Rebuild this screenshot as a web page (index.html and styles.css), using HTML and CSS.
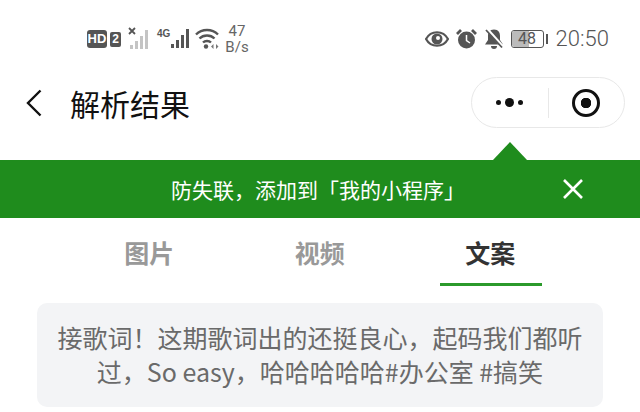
FILE: index.html
```html
<!DOCTYPE html>
<html lang="zh-CN">
<head>
    <meta charset="UTF-8">
    <meta name="viewport" content="width=device-width, initial-scale=1.0">
    <title>解析结果</title>
    <link rel="stylesheet" href="styles.css">
</head>
<body>
    <div class="page">
        <!-- status bar -->
        <div class="status">
            <div class="status-left">
                <span class="hd">HD</span>
                <span class="sim">2</span>
                <svg class="signal-x" width="22" height="24" viewBox="0 0 22 24">
                    <path d="M1 1l6 6M7 1l-6 6" stroke="#555" stroke-width="1.800" fill="none"/>
                    <rect x="2" y="18" width="3" height="4" fill="#c4c4c4"/>
                    <rect x="7" y="14" width="3" height="8" fill="#c4c4c4"/>
                    <rect x="12" y="9" width="3" height="13" fill="#c4c4c4"/>
                    <rect x="17" y="3" width="3" height="19" fill="#c4c4c4"/>
                </svg>
                <div class="signal-4g">
                    <span class="net">4G</span>
                    <svg width="21" height="20" viewBox="0 0 21 20">
                        <rect x="1" y="15" width="3" height="4" fill="#555"/>
                        <rect x="6" y="11" width="3" height="8" fill="#555"/>
                        <rect x="11" y="6" width="3" height="13" fill="#555"/>
                        <rect x="16" y="0" width="3" height="19" fill="#555"/>
                    </svg>
                </div>
                <svg class="wifi" width="24" height="22" viewBox="0 0 24 22">
                    <path d="M1 6.500c6-6 16-6 22 0M4.500 10.500c4-4 11-4 15 0M8 14.500c2-2 6-2 8 0" stroke="#555" stroke-width="2.400" fill="none"/>
                    <circle cx="11" cy="18.500" r="2.200" fill="#555"/>
                    <path d="M16 18.500l2.500-2.500v5zM23.500 18.500l-2.500-2.500v5z" fill="#777"/>
                </svg>
                <div class="speed"><span>47</span><span>B/s</span></div>
            </div>
            <div class="status-right">
                <svg width="24" height="16" viewBox="0 0 24 16">
                    <path d="M1 8c5-9 17-9 22 0c-5 9-17 9-22 0z" fill="none" stroke="#555" stroke-width="2.200"/>
                    <circle cx="12" cy="8" r="5.500" fill="#555"/>
                    <circle cx="13" cy="7" r="2" fill="#fff"/>
                </svg>
                <svg width="21" height="20" viewBox="0 0 21 20">
                    <circle cx="10.500" cy="11" r="8.500" fill="#555"/>
                    <path d="M10.500 6v5.500l3.500 2.500" stroke="#fff" stroke-width="1.500" fill="none"/>
                    <path d="M1 5l4-4M20 5l-4-4" stroke="#555" stroke-width="2.800" fill="none"/>
                </svg>
                <svg width="20" height="20" viewBox="0 0 20 20">
                    <path d="M10 0.500c-4.500 0-6 3-6 6.500v4l-3 4.500h18l-3-4.500v-4c0-3.500-1.500-6.500-6-6.500z" fill="#555"/>
                    <path d="M7 17a3 3 0 0 0 6 0z" fill="#555"/>
                    <path d="M3 0l16 18" stroke="#fff" stroke-width="3"/>
                    <path d="M2 1l16 17.500" stroke="#555" stroke-width="1.800"/>
                </svg>
                <div class="battery-wrap">
                    <div class="battery"><div class="battery-fill"></div><span class="battery-num">48</span></div>
                    <div class="battery-tip"></div>
                </div>
                <span class="clock">20:50</span>
            </div>
        </div>

        <!-- title bar -->
        <div class="nav">
            <svg class="back" width="18" height="28" viewBox="0 0 18 28">
                <path d="M15.500 1.500L3 14l12.500 12.500" fill="none" stroke="#111" stroke-width="2.400"/>
            </svg>
            <h1 class="nav-title">解析结果</h1>
            <div class="capsule">
                <div class="capsule-more">
                    <i class="dot"></i><i class="dot big"></i><i class="dot"></i>
                </div>
                <div class="capsule-line"></div>
                <div class="capsule-close"><i class="target"></i></div>
            </div>
        </div>

        <!-- green tip -->
        <div class="tip">
            <div class="tip-arrow"></div>
            <span class="tip-text">防失联，添加到「我的小程序」</span>
            <svg class="tip-close" width="22" height="22" viewBox="0 0 22 22">
                <path d="M2 2l18 18M20 2L2 20" stroke="#fff" stroke-width="2.600" fill="none"/>
            </svg>
        </div>

        <!-- tabs -->
        <div class="tabs">
            <div class="tab">图片</div>
            <div class="tab">视频</div>
            <div class="tab active">文案</div>
        </div>

        <div class="card">接歌词！这期歌词出的还挺良心，起码我们都听过，So easy，哈哈哈哈哈#办公室 #搞笑</div>
    </div>
</body>
</html>
```

FILE: styles.css
```css
* {
    box-sizing: border-box;
}

html, body {
    margin: 0;
    height: 412px;
    overflow: hidden;
    background: #fff;
}

.page {
    font-family: "Noto Sans CJK SC", "Noto Sans", sans-serif;
}

/* status bar */
.status {
    display: flex;
    justify-content: space-between;
    align-items: center;
    height: 78px;
    padding: 0 31px 0 87px;
}

.status-left, .status-right {
    display: flex;
    align-items: center;
}

.hd {
    width: 20px;
    height: 18px;
    border-radius: 3px;
    background: #555;
    color: #fff;
    font: bold 13px/18px "Liberation Sans", sans-serif;
    text-align: center;
}

.sim {
    width: 11px;
    height: 15px;
    margin-left: 3px;
    border-radius: 2px;
    background: #555;
    color: #fff;
    font: bold 12px/15px "Liberation Sans", sans-serif;
    text-align: center;
}

.signal-x {
    margin-left: 7px;
}

.signal-4g {
    display: flex;
    align-items: flex-end;
    margin-left: 7px;
}

.net {
    align-self: flex-start;
    color: #555;
    font: bold 10px/10px "Liberation Sans", sans-serif;
}

.wifi {
    margin-left: 4px;
}

.speed {
    display: flex;
    flex-direction: column;
    align-items: center;
    margin-left: 6px;
    color: #666;
    font: 15px/16px "Roboto", sans-serif;
}

.status-right svg {
    margin-right: 7px;
}

.battery-wrap {
    display: flex;
    align-items: center;
    margin-right: 8px;
}

.battery {
    position: relative;
    width: 33px;
    height: 18px;
    border: 1.500px solid #555;
    border-radius: 3px;
    overflow: hidden;
}

.battery-fill {
    width: 17px;
    height: 100%;
    background: #bbb;
}

.battery-num {
    position: absolute;
    top: 0;
    left: 0;
    width: 100%;
    color: #555;
    font: 16px/15px "Roboto", sans-serif;
    text-align: center;
}

.battery-tip {
    width: 2px;
    height: 10px;
    margin-left: 2px;
    background: #555;
}

.clock {
    color: #555;
    font: 300 22px/24px "Roboto", sans-serif;
}

/* title bar */
.nav {
    display: flex;
    align-items: center;
    height: 82px;
    padding: 0 15px 33px 25px;
}

.nav-title {
    flex: 1;
    margin: 0 0 0 27px;
    color: #111;
    font-size: 30px;
    font-weight: 400;
    line-height: 40px;
}

.capsule {
    display: flex;
    flex-shrink: 0;
    align-items: center;
    width: 154px;
    height: 51px;
    border: 1px solid #e8e8e8;
    border-radius: 26px;
}

.capsule-more {
    display: flex;
    flex: 1;
    justify-content: center;
    align-items: center;
    gap: 4px;
}

.dot {
    width: 5px;
    height: 5px;
    border-radius: 50%;
    background: #111;
}

.dot.big {
    width: 9px;
    height: 9px;
}

.capsule-line {
    width: 1px;
    height: 30px;
    background: #e8e8e8;
}

.capsule-close {
    display: flex;
    flex: 1;
    justify-content: center;
    align-items: center;
}

.target {
    display: flex;
    width: 28px;
    height: 28px;
    border: 3px solid #111;
    border-radius: 50%;
    background: radial-gradient(circle, #111 0, #111 5px, #fff 5.500px);
}

/* green tip */
.tip {
    position: relative;
    display: flex;
    align-items: center;
    height: 58px;
    padding: 0 56px 0 171px;
    background: #1f8c1d;
}

.tip-arrow {
    position: absolute;
    top: -18px;
    left: 493px;
    width: 34px;
    height: 18px;
    background: #1f8c1d;
    clip-path: polygon(50% 0, 100% 100%, 0 100%);
}

.tip-text {
    flex: 1;
    color: #fff;
    font-size: 21px;
    line-height: 30px;
}

/* tabs */
.tabs {
    display: grid;
    grid-template-columns: repeat(3, 170.500px);
    height: 85px;
    padding: 0 64px;
}

.tab {
    position: relative;
    height: 68px;
    color: #999;
    font-size: 25px;
    font-weight: 700;
    line-height: 68px;
    text-align: center;
}

.tab.active {
    color: #333;
}

.tab.active::after {
    content: "";
    position: absolute;
    left: 35px;
    bottom: 0;
    width: 102px;
    height: 3px;
    background: #2b9a2b;
}

.card {
    width: 566px;
    height: 104px;
    margin-left: 37px;
    padding: 17px 20px;
    border-radius: 10px;
    background: #f3f4f6;
    color: #6a6a6a;
    font-size: 25px;
    line-height: 34px;
    text-align: center;
}
```
